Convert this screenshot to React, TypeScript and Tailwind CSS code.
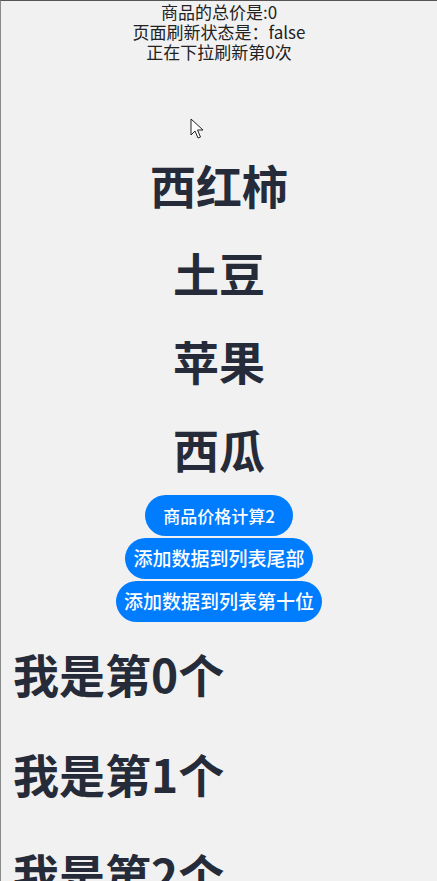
import React from "react";

const font = { fontFamily: '"Noto Sans CJK SC", "Noto Sans", sans-serif' };

export default function App() {
  const fruits = ["西红柿", "土豆", "苹果", "西瓜"];
  const items = [0, 1, 2];
  return (
    <div
      className="relative w-[437px] h-[881px] overflow-hidden bg-[#f1f1f1] border-t border-l border-t-[#555] border-l-[#8a8a8a]"
      style={font}
    >
      <div className="flex flex-col items-center text-[17px] leading-[20px] text-[#222] pt-[1px]">
        <div>商品的总价是:0</div>
        <div>页面刷新状态是：false</div>
        <div>正在下拉刷新第0次</div>
      </div>
      <div className="h-[78px]" />
      <div className="flex flex-col items-center">
        {fruits.map((f) => (
          <div
            key={f}
            className="h-[88px] flex items-center justify-center text-[46px] font-bold text-[#252b38]"
          >
            {f}
          </div>
        ))}
      </div>
      <div className="flex flex-col items-center gap-[2px] mt-[3px]">
        <button className="h-[41px] w-[148px] rounded-full bg-[#007dff] text-white text-[17px] font-medium flex items-center justify-center">
          商品价格计算2
        </button>
        <button className="h-[41px] w-[188px] rounded-full bg-[#007dff] text-white text-[19px] font-medium flex items-center justify-center">
          添加数据到列表尾部
        </button>
        <button className="h-[41px] w-[206px] rounded-full bg-[#007dff] text-white text-[19px] font-medium flex items-center justify-center">
          添加数据到列表第十位
        </button>
      </div>
      <div className="flex flex-col mt-[1px]">
        {items.map((i) => (
          <div
            key={i}
            className="h-[100px] flex items-center pl-[12px] text-[46px] font-bold text-[#252b38]"
          >
            我是第{i}个
          </div>
        ))}
      </div>
      <svg
        className="absolute left-[189px] top-[117px]"
        width="16"
        height="22"
        viewBox="0 0 16 22"
      >
        <path
          d="M1 1 L1 17 L5 13 L8 20 L10.5 19 L7.5 12 L13 12 Z"
          fill="#fff"
          stroke="#222"
          strokeWidth="1"
          strokeLinejoin="miter"
        />
      </svg>
    </div>
  );
}
